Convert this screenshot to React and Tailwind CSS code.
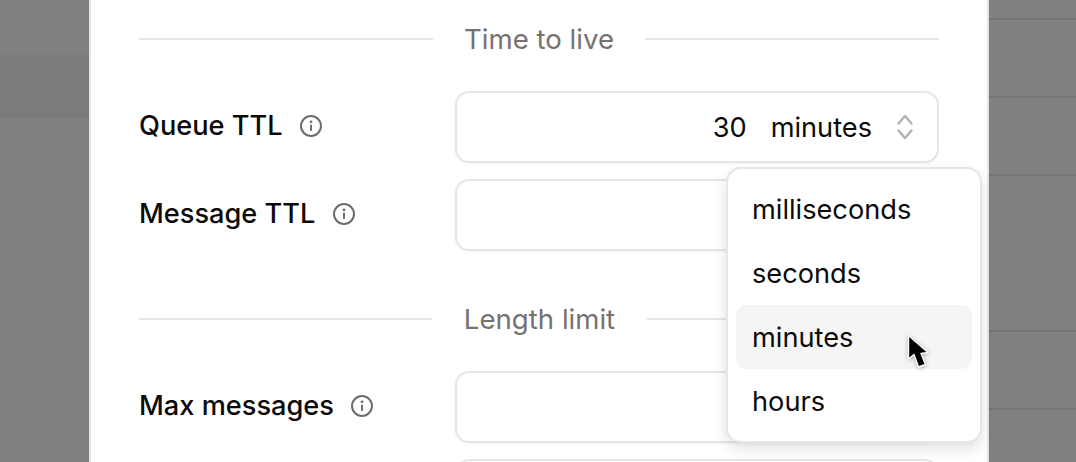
const font = { fontFamily: 'Inter, "Liberation Sans", sans-serif' };

function InfoIcon() {
  return (
    <svg width="22" height="22" viewBox="0 0 22 22" fill="none" className="shrink-0">
      <circle cx="11" cy="11" r="10" stroke="#6f6c6a" strokeWidth="2" />
      <circle cx="11" cy="6.8" r="1.4" fill="#6f6c6a" />
      <rect x="10" y="9.5" width="2" height="6.5" rx="0.8" fill="#6f6c6a" />
    </svg>
  );
}

function Section({ title, leftWidth, rightWidth }) {
  return (
    <div className="flex h-[26px] items-center justify-between">
      <div className="h-[2px] bg-[#e7e6e5]" style={{ width: leftWidth }} />
      <div className="text-[27.6px] leading-[26px] text-[#76726f]">{title}</div>
      <div className="h-[2px] bg-[#e7e6e5]" style={{ width: rightWidth }} />
    </div>
  );
}

function Row({ label, children }) {
  return (
    <div className="flex h-[72px] items-center justify-between">
      <div className="flex items-center gap-[17.5px] pb-[3px] text-[27.2px] font-medium leading-[26px] text-[#0c0a09]">
        {label && <span>{label}</span>}
        {label && <InfoIcon />}
      </div>
      <div className="flex h-[72px] w-[484px] items-center justify-end rounded-[14px] border-2 border-[#e7e6e5] bg-white shadow-[0_1px_2px_rgba(0,0,0,0.05)]">
        {children}
      </div>
    </div>
  );
}

function Option({ children, active }) {
  return (
    <div className={`flex h-[64px] items-center rounded-[10px] px-4 pt-[2px] text-[27.2px] text-[#0c0a09] ${active ? 'bg-[#f5f5f5]' : ''}`}>
      {children}
    </div>
  );
}

export default function App() {
  return (
    <div style={font} className="relative flex h-[462px] w-[1076px] overflow-hidden bg-[#808080]">
      <div className="w-[89px] shrink-0 pt-[55px]">
        <div className="h-[63px] bg-[#7b7b7b]" />
      </div>
      <div className="h-[462px] w-[900px] shrink-0 border-x-2 border-[#e6e6e6] bg-white px-[48px] pt-[26px]">
        <Section title="Time to live" leftWidth="294px" rightWidth="294px" />
        <div className="mt-[39px] flex flex-col gap-4">
          <Row label="Queue TTL">
            <div className="flex items-center pr-[24px] text-[27.2px] leading-[27px] text-[#0c0a09]">
              <span>30</span>
              <span className="ml-[24px]">minutes</span>
              <svg width="16" height="26" viewBox="0 0 16 26" fill="none" className="ml-[25px]">
                <path d="M1.5 9.5 L8 2 L14.5 9.5" stroke="#b4b2b0" strokeWidth="2.4" strokeLinecap="round" strokeLinejoin="round" />
                <path d="M1.5 16.5 L8 24 L14.5 16.5" stroke="#b4b2b0" strokeWidth="2.4" strokeLinecap="round" strokeLinejoin="round" />
              </svg>
            </div>
          </Row>
          <Row label="Message TTL" />
        </div>
        <div className="mt-[55px]">
          <Section title="Length limit" leftWidth="293px" rightWidth="292px" />
        </div>
        <div className="mt-[39px] flex flex-col gap-4">
          <Row label="Max messages" />
          <Row />
        </div>
      </div>
      <div className="flex-1">
        <div className="h-[20px] border-b-2 border-[#787472]" />
        <div className="h-[78px] border-b-2 border-[#787472]" />
        <div className="h-[78px] border-b-2 border-[#787472]" />
        <div className="h-[78px]" />
        <div className="h-[78px] border-b-2 border-[#787472]" />
        <div className="h-[78px] border-b-2 border-[#787472]" />
      </div>
      <div className="absolute left-[726px] top-[167px] h-[276px] w-[256px] rounded-[15px] border-2 border-[#e7e6e5] bg-white p-[8px] shadow-[0_6px_14px_rgba(0,0,0,0.12)]">
        <Option>milliseconds</Option>
        <Option>seconds</Option>
        <Option active>minutes</Option>
        <Option>hours</Option>
      </div>
      <svg className="absolute left-[904px] top-[332px] drop-shadow-[0_1px_2px_rgba(0,0,0,0.3)]" width="28" height="40" viewBox="0 0 28 40">
        <path d="M4.5 3.5 L4.5 27 L10 22.5 L14.5 35 L21.5 32.5 L17 21.5 L24 20.5 Z" fill="#000" stroke="#fff" strokeWidth="1.4" strokeLinejoin="round" />
      </svg>
    </div>
  );
}
